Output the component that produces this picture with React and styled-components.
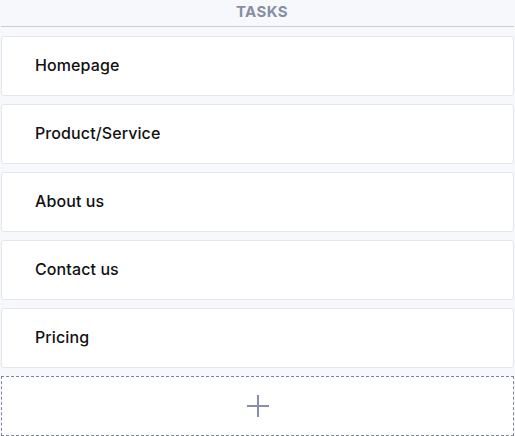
import React from "react";
import styled, { createGlobalStyle } from "styled-components";

const Global = createGlobalStyle`
  html, body { margin: 0; padding: 0; background: #f7f8fc; }
  body { font-family: "Inter", "Liberation Sans", sans-serif; }
`;

const Board = styled.div`
  width: 515px;
  height: 436px;
  display: flex;
  flex-direction: column;
  background: #f7f8fc;
  box-sizing: border-box;
  padding: 0 1px;
  overflow: hidden;
`;

const Header = styled.div`
  height: 27px;
  box-sizing: border-box;
  padding: 0 0 4px 9px;
  display: flex;
  align-items: center;
  justify-content: center;
  border-bottom: 1px solid #c9ced9;
  margin-bottom: 9px;
  font-family: "Inter", "Open Sans", sans-serif;
  font-weight: 700;
  font-size: 15px;
  letter-spacing: 0.4px;
  color: #868fa2;
`;

const List = styled.div`
  display: flex;
  flex-direction: column;
  gap: 8px;
`;

const Card = styled.div`
  height: 60px;
  box-sizing: border-box;
  background: #ffffff;
  border: 1px solid #e3e6ed;
  border-radius: 3px;
  display: flex;
  align-items: center;
  padding: 0 0 3px 33px;
  font-family: "Inter", sans-serif;
  font-weight: 500;
  font-size: 16px;
  letter-spacing: 0.1px;
  color: #111111;
`;

const AddCard = styled.button`
  height: 60px;
  box-sizing: border-box;
  background: #ffffff;
  border: 1px dashed #7c86a2;
  border-radius: 0;
  display: flex;
  align-items: center;
  justify-content: center;
  padding: 0;
  cursor: pointer;
`;

const tasks = ["Homepage", "Product/Service", "About us", "Contact us", "Pricing"];

export default function App() {
  return (
    <>
      <Global />
      <Board>
        <Header>TASKS</Header>
        <List>
          {tasks.map((t) => (
            <Card key={t}>{t}</Card>
          ))}
          <AddCard aria-label="Add task">
            <svg width="24" height="24" viewBox="0 0 24 24">
              <path d="M12 1v22M1 12h22" stroke="#8690aa" strokeWidth="2" fill="none" />
            </svg>
          </AddCard>
        </List>
      </Board>
    </>
  );
}
